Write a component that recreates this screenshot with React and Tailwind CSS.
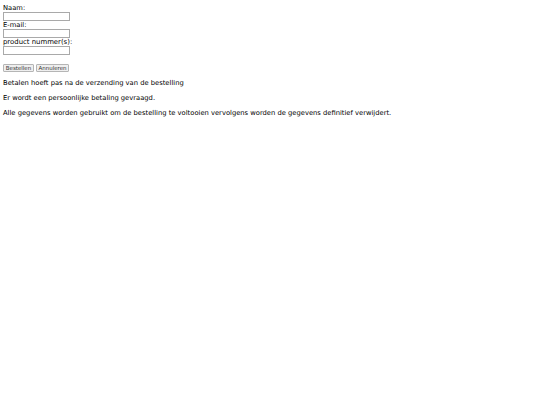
// Order form, rendered small like the reference.
export default function App() {
  return (
    <div
      className="min-h-[405px] bg-white px-[3px] pt-[4px] text-[6.75px] leading-[8px] text-black"
      style={{ fontFamily: '"DejaVu Sans", sans-serif' }}
    >
      <form className="flex flex-col items-start">
        <label className="block h-[8px]">Naam:</label>
        <input type="text" className="block h-[9px] w-[67px] border border-[#a9a9a9] bg-white" />
        <label className="block h-[8px]">E-mail:</label>
        <input type="text" className="block h-[9px] w-[67px] border border-[#a9a9a9] bg-white" />
        <label className="block h-[8px] text-[6.9px]">product nummer(s):</label>
        <input type="text" className="block h-[9px] w-[67px] border border-[#a9a9a9] bg-white" />

        <div className="mt-[9px] flex gap-[2px]">
          <button
            type="button"
            className="flex h-[8px] w-[31px] items-center justify-center rounded-[1px] border border-[#b5b5b5] bg-[#efefef] text-[5.5px] leading-[6px] text-[#333]"
          >
            Bestellen
          </button>
          <button
            type="button"
            className="flex h-[8px] w-[33px] items-center justify-center rounded-[1px] border border-[#b5b5b5] bg-[#efefef] text-[5.5px] leading-[6px] text-[#333]"
          >
            Annuleren
          </button>
        </div>
      </form>

      <div className="mt-[7px] flex flex-col gap-[7px]">
        <p>Betalen hoeft pas na de verzending van de bestelling</p>
        <p>Er wordt een persoonlijke betaling gevraagd.</p>
        <p>Alle gegevens worden gebruikt om de bestelling te voltooien vervolgens worden de gegevens definitief verwijdert.</p>
      </div>
    </div>
  )
}
